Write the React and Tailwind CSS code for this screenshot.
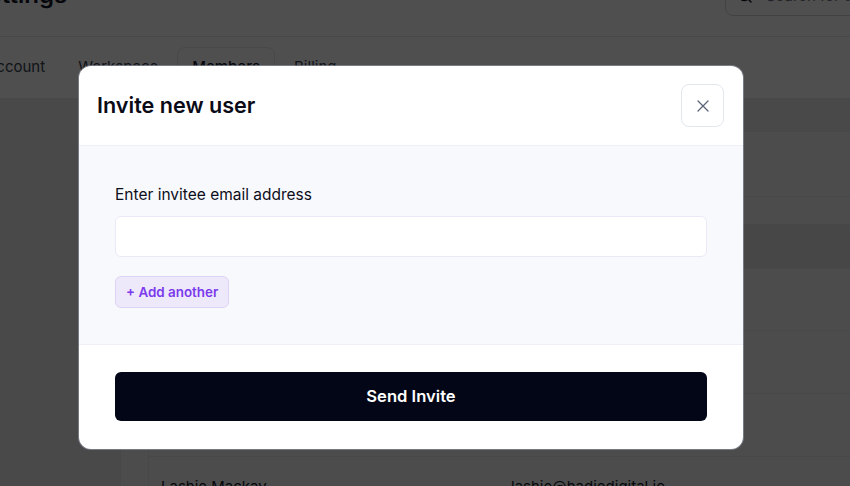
import React from "react";

export default function App() {
  return (
    <div className="relative h-[486px] w-[850px] overflow-hidden bg-white font-['Inter',sans-serif]">
      {/* Underlying settings page */}
      <div className="-ml-[40px] w-[1000px]">
        <div className="flow-root h-[37px] border-b border-[#e5e7eb] pl-[12px]">
          <div className="-mt-[24px] flex h-[40px] items-center justify-between">
            <h1 className="mb-[3px] text-[24px] leading-8 font-semibold text-[#111827]">Settings</h1>
            <div className="flex h-[40px] w-[235px] items-center gap-3 rounded-lg border border-[#d1d5db] px-[10px]">
              <svg width="18" height="18" viewBox="0 0 24 24" fill="none" stroke="#111827" strokeWidth="2" strokeLinecap="round">
                <circle cx="11" cy="11" r="7" />
                <path d="M20 20l-4-4" />
              </svg>
              <span className="text-[15px] text-[#6b7280]">Search for users</span>
            </div>
          </div>
        </div>
        <div className="flex h-[62px] items-center gap-[5px] border-b border-[#e5e7eb] pl-[12px]">
          <div className="flex h-[41px] items-center px-[14px] text-[15px] text-[#374151]">Account</div>
          <div className="flex h-[41px] items-center px-[14px] text-[15px] text-[#374151]">Workspace</div>
          <div className="flex h-[41px] items-center rounded-lg border border-[#e5e7eb] bg-white px-[14px] text-[15px] font-medium text-[#111827]">Members</div>
          <div className="flex h-[41px] items-center px-[14px] text-[15px] text-[#374151]">Billing</div>
        </div>
        <div className="flex h-[400px]">
          <div className="w-[161px] border-r border-[#e5e7eb] bg-[#ececec]" />
          <div className="w-[28px] border-r border-[#e5e7eb] bg-[#f5f5f5]" />
          <div className="flex flex-1 flex-col bg-[#f5f5f6]">
            <div className="h-[33px] border-b border-[#e5e7eb] bg-[#ececec]" />
            <div className="h-[65px] border-b border-[#e5e7eb]" />
            <div className="h-[28px] border-b border-[#e5e7eb]" />
            <div className="h-[44px] border-b border-[#e5e7eb] bg-[#e6e6e8]" />
            <div className="h-[62px] border-b border-[#e5e7eb]" />
            <div className="h-[63px] border-b border-[#e5e7eb]" />
            <div className="h-[63px] border-b border-[#e5e7eb]" />
            <div className="flex pl-[12px] pt-[19px] text-[15px] text-[#111827]">
              <span className="w-[350px]">Lashie Mackay</span>
              <span>lashie@hadiedigital.io</span>
            </div>
          </div>
        </div>
      </div>

      {/* Overlay */}
      <div className="absolute inset-0 bg-black/[0.69]" />

      {/* Modal */}
      <div className="absolute left-[79px] top-[66px] w-[664px] overflow-hidden rounded-xl bg-white shadow-[0_0_0_1px_rgba(148,155,170,0.6)]">
        <div className="flex h-[80px] items-center justify-between border-b border-[#eef0f6] pl-[18px] pr-[19px]">
          <h2 className="text-[21.6px] font-semibold text-[#0b0b17]">Invite new user</h2>
          <button className="flex h-[43px] w-[43px] items-center justify-center rounded-lg border border-[#e2e6ef] bg-white">
            <svg width="12" height="12" viewBox="0 0 12 12" fill="none">
              <path d="M1 1l10 10M11 1L1 11" stroke="#5b6478" strokeWidth="1.3" strokeLinecap="round" />
            </svg>
          </button>
        </div>
        <div className="border-b border-[#eef0f6] bg-[#f8f9fc] px-[36px] pt-[37px] pb-[36px]">
          <label className="block text-[15.5px] leading-6 text-[#0e0e1a]">Enter invitee email address</label>
          <input className="mt-[9px] block h-[41px] w-full rounded-md border border-[#ebe8f7] bg-white outline-none" />
          <button className="mt-[19px] h-[32px] rounded-md border border-[#ddd3f5] bg-[#eee9fa] px-[10px] text-[13.4px] font-semibold text-[#7c3aed]">
            + Add another
          </button>
        </div>
        <div className="px-[36px] pt-[27px] pb-[28px]">
          <button className="h-[49px] w-full rounded-md bg-[#030616] text-[16.6px] font-semibold text-white">
            Send Invite
          </button>
        </div>
      </div>
    </div>
  );
}
